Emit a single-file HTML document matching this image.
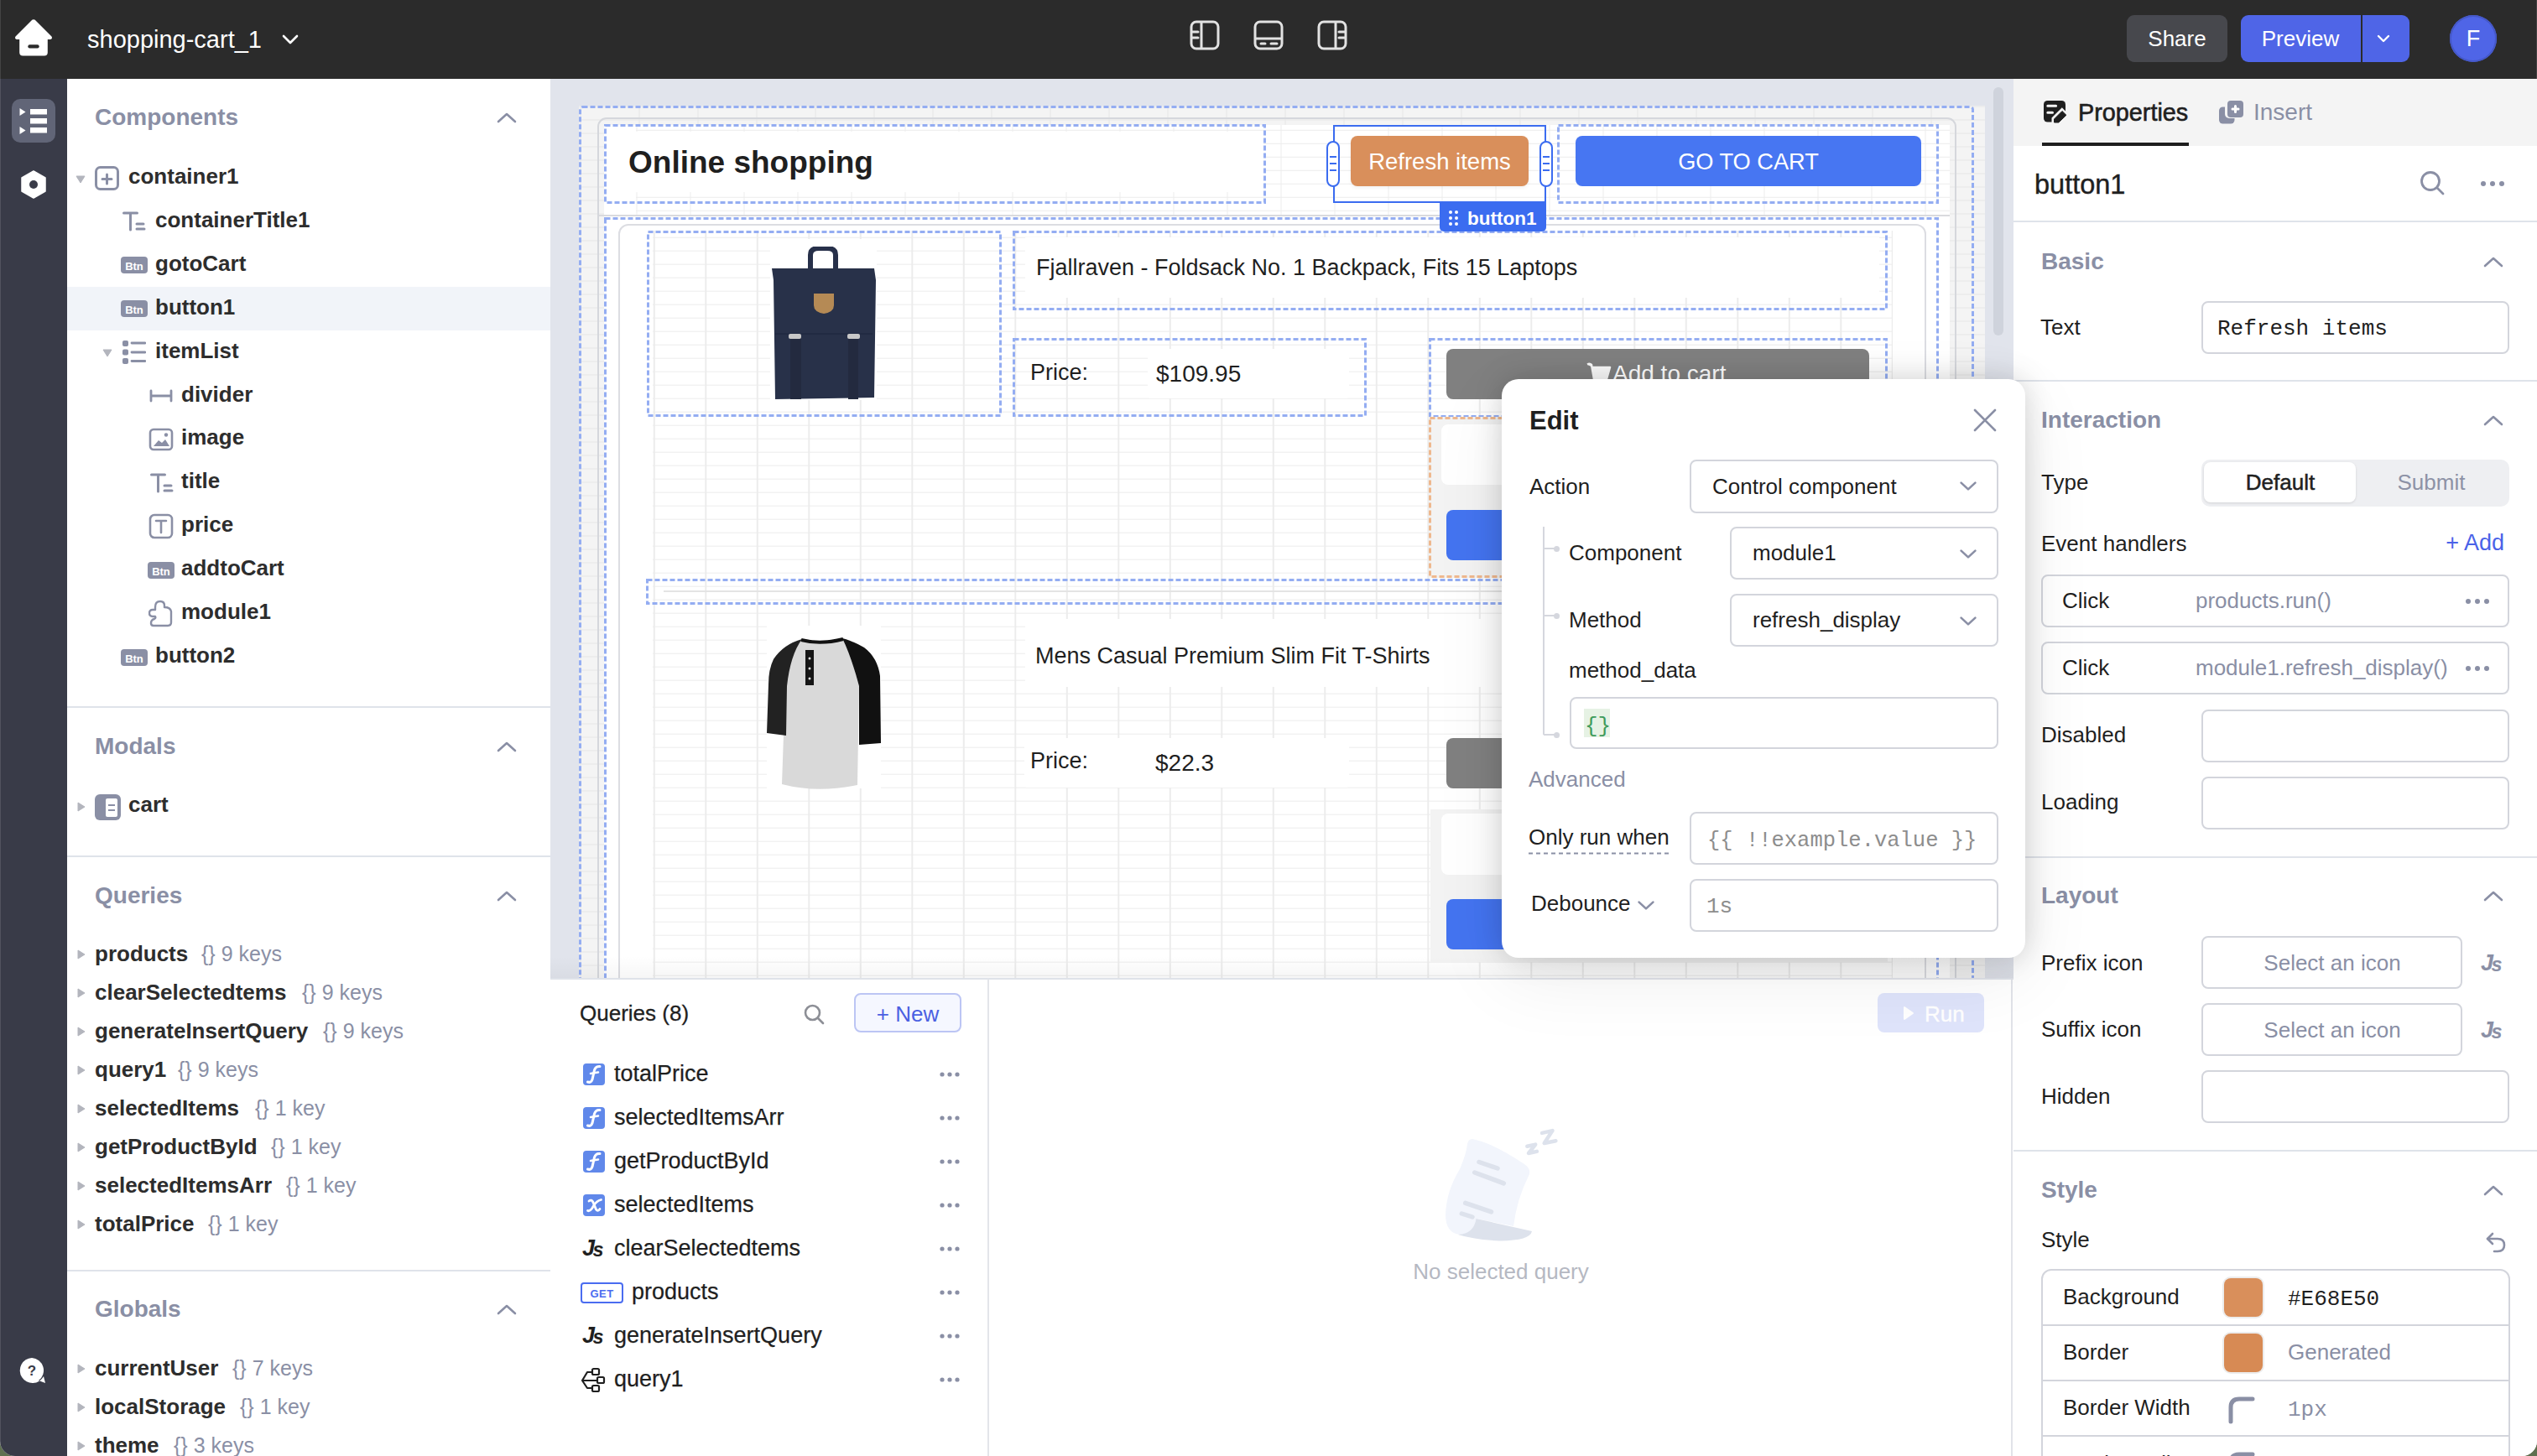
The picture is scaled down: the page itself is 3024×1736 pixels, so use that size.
<!DOCTYPE html>
<html><head><meta charset="utf-8"><style>
html,body{margin:0;padding:0;}
body{width:3024px;height:1736px;overflow:hidden;position:relative;background:#5f7050;font-family:'Liberation Sans',sans-serif;}
#app{position:absolute;left:0;top:0;width:3024px;height:1736px;overflow:hidden;border-radius:0 0 18px 18px;background:#fff;}
</style></head><body><div id="app">
<div style="position:absolute;left:0px;top:0px;width:3024px;height:94px;background:#2b2b2b;"></div>
<div style="position:absolute;left:0px;top:94px;width:80px;height:1642px;background:#393b48;"></div>
<div style="position:absolute;left:80px;top:94px;width:576px;height:1642px;background:#fff;"></div>
<div style="position:absolute;left:656px;top:94px;width:1744px;height:1072px;background:#e1e4ec;"></div>
<svg style="position:absolute;left:16px;top:21px;" width="48" height="48" viewBox="0 0 48 48"><path d="M24 2.5 Q25 2 26 3 L45.5 22.5 Q47 25 44 26 L40.8 26 L40.8 41.5 Q40.8 45.5 36.8 45.5 L11.2 45.5 Q7.2 45.5 7.2 41.5 L7.2 26 L4 26 Q1 25 2.5 22.5 L22 3 Q23 2 24 2.5 Z" fill="#fff"/><rect x="17.3" y="32.3" width="13.4" height="4.3" rx="2.1" fill="#2b2b2b"/></svg>
<div style="position:absolute;top:32.5px;font-size:29px;line-height:29px;color:#fff;font-weight:400;font-family:'Liberation Sans', sans-serif;white-space:nowrap;left:104px;">shopping-cart_1</div>
<svg style="position:absolute;left:335px;top:40px;" width="22" height="14" viewBox="0 0 22 14"><path d="M3 3 L11 11 L19 3" stroke="#fff" stroke-width="2.6" fill="none" stroke-linecap="round" stroke-linejoin="round"/></svg>
<svg style="position:absolute;left:1418px;top:24px;" width="36" height="36" viewBox="0 0 36 36"><rect x="2" y="2" width="32" height="32" rx="6" stroke="#e2e2e2" stroke-width="3" fill="none"/><line x1="14" y1="2" x2="14" y2="34" stroke="#e2e2e2" stroke-width="3"/><line x1="3" y1="14" x2="10" y2="14" stroke="#e2e2e2" stroke-width="3" stroke-linecap="round"/><line x1="3" y1="21" x2="10" y2="21" stroke="#e2e2e2" stroke-width="3" stroke-linecap="round"/></svg>
<svg style="position:absolute;left:1494px;top:24px;" width="36" height="36" viewBox="0 0 36 36"><rect x="2" y="2" width="32" height="32" rx="6" stroke="#e2e2e2" stroke-width="3" fill="none"/><line x1="2" y1="22" x2="34" y2="22" stroke="#e2e2e2" stroke-width="3"/><line x1="9" y1="28" x2="14" y2="28" stroke="#e2e2e2" stroke-width="3" stroke-linecap="round"/><line x1="21" y1="28" x2="28" y2="28" stroke="#e2e2e2" stroke-width="3" stroke-linecap="round"/></svg>
<svg style="position:absolute;left:1570px;top:24px;" width="36" height="36" viewBox="0 0 36 36"><rect x="2" y="2" width="32" height="32" rx="6" stroke="#e2e2e2" stroke-width="3" fill="none"/><line x1="22" y1="2" x2="22" y2="34" stroke="#e2e2e2" stroke-width="3"/><line x1="26" y1="14" x2="33" y2="14" stroke="#e2e2e2" stroke-width="3" stroke-linecap="round"/><line x1="26" y1="21" x2="33" y2="21" stroke="#e2e2e2" stroke-width="3" stroke-linecap="round"/></svg>
<div style="position:absolute;left:2535px;top:18px;width:120px;height:56px;background:#47484d;border-radius:9px;"></div>
<div style="position:absolute;top:33.0px;font-size:26px;line-height:26px;color:#fff;font-weight:400;font-family:'Liberation Sans', sans-serif;white-space:nowrap;left:1595px;width:2000px;text-align:center;">Share</div>
<div style="position:absolute;left:2671px;top:18px;width:201px;height:56px;background:#4f65e7;border-radius:9px;"></div>
<div style="position:absolute;left:2814px;top:18px;width:2px;height:56px;background:#2b2b2b;"></div>
<div style="position:absolute;top:33.0px;font-size:26px;line-height:26px;color:#fff;font-weight:400;font-family:'Liberation Sans', sans-serif;white-space:nowrap;left:1742px;width:2000px;text-align:center;">Preview</div>
<svg style="position:absolute;left:2831px;top:40px;" width="20" height="12" viewBox="0 0 20 12"><path d="M4 3 L10 9 L16 3" stroke="#fff" stroke-width="2.4" fill="none" stroke-linecap="round" stroke-linejoin="round"/></svg>
<div style="position:absolute;left:2920px;top:18px;width:56px;height:56px;background:#4f65e7;border-radius:50%;box-shadow:inset 0 0 0 2px #4558c8;"></div>
<div style="position:absolute;top:33.1px;font-size:27px;line-height:27px;color:#fff;font-weight:400;font-family:'Liberation Sans', sans-serif;white-space:nowrap;left:1948px;width:2000px;text-align:center;">F</div>
<div style="position:absolute;left:14px;top:118px;width:52px;height:52px;background:#616577;border-radius:10px;"></div>
<svg style="position:absolute;left:14px;top:118px;" width="52" height="52" viewBox="0 0 52 52"><path d="M9.5 11 L16.5 15.5 L9.5 20 Z" fill="#fff"/><path d="M9.5 33 L16.5 37.5 L9.5 42 Z" fill="#fff"/><rect x="22" y="12" width="20" height="6.5" fill="#fff"/><rect x="22" y="23" width="20" height="6.5" fill="#fff"/><rect x="22" y="34" width="20" height="6.5" fill="#fff"/></svg>
<svg style="position:absolute;left:24px;top:203px;" width="32" height="34" viewBox="0 0 32 34"><path d="M16 1 L30 9 L30 25 L16 33 L2 25 L2 9 Z" fill="#fff" stroke="#fff" stroke-width="1.5" stroke-linejoin="round"/><circle cx="16" cy="17" r="5" fill="#393b48"/></svg>
<svg style="position:absolute;left:21px;top:1617px;" width="34" height="34" viewBox="0 0 34 34"><path d="M17 2 A15 15 0 1 0 31 24 L33 32 L25 29 A15 15 0 0 0 17 2 Z" fill="#fff"/><text x="17" y="23" font-family="Liberation Sans" font-weight="bold" font-size="17" text-anchor="middle" fill="#393b48">?</text></svg>
<div style="position:absolute;top:126.3px;font-size:28px;line-height:28px;color:#8a8fa5;font-weight:700;font-family:'Liberation Sans', sans-serif;white-space:nowrap;left:113px;">Components</div>
<svg style="position:absolute;left:592px;top:133px;" width="24" height="14" viewBox="0 0 24 14"><path d="M2 12 L12 3 L22 12" stroke="#8a8fa5" stroke-width="2.6" fill="none" stroke-linecap="round" stroke-linejoin="round"/></svg>
<div style="position:absolute;left:80px;top:342px;width:576px;height:52px;background:#f1f4f9;"></div>
<svg style="position:absolute;left:90px;top:209px;" width="12" height="10" viewBox="0 0 12 10"><path d="M1 1 L11 1 L6 9 Z" fill="#b3b5bd" stroke="#b3b5bd" stroke-width="1" stroke-linejoin="round"/></svg>
<svg style="position:absolute;left:112px;top:197px;" width="31" height="31" viewBox="0 0 31 31"><rect x="2.5" y="2.5" width="26" height="26" rx="5" stroke="#8a8fa5" stroke-width="3" fill="none"/><path d="M15.5 11 V22 M10 16.5 H21" stroke="#8a8fa5" stroke-width="3" stroke-linecap="round"/></svg>
<div style="position:absolute;top:197.0px;font-size:26px;line-height:26px;color:#2d2d2d;font-weight:700;font-family:'Liberation Sans', sans-serif;white-space:nowrap;left:153px;">container1</div>
<svg style="position:absolute;left:146px;top:252px;" width="28" height="24" viewBox="0 0 28 24"><path d="M1.5 2 H17.5 M9.5 2 V22" stroke="#8a8fa5" stroke-width="3" stroke-linecap="round"/><path d="M17 15 H25 M17 21 H26" stroke="#8a8fa5" stroke-width="3" stroke-linecap="round"/></svg>
<div style="position:absolute;top:249.0px;font-size:26px;line-height:26px;color:#2d2d2d;font-weight:700;font-family:'Liberation Sans', sans-serif;white-space:nowrap;left:185px;">containerTitle1</div>
<div style="position:absolute;left:144px;top:306px;width:32px;height:20px;background:#8a8fa5;border-radius:4px;"></div>
<div style="position:absolute;top:310.5px;font-size:13px;line-height:13px;color:#fff;font-weight:700;font-family:'Liberation Sans', sans-serif;white-space:nowrap;left:-840px;width:2000px;text-align:center;">Btn</div>
<div style="position:absolute;top:301.0px;font-size:26px;line-height:26px;color:#2d2d2d;font-weight:700;font-family:'Liberation Sans', sans-serif;white-space:nowrap;left:185px;">gotoCart</div>
<div style="position:absolute;left:144px;top:358px;width:32px;height:20px;background:#8a8fa5;border-radius:4px;"></div>
<div style="position:absolute;top:362.5px;font-size:13px;line-height:13px;color:#fff;font-weight:700;font-family:'Liberation Sans', sans-serif;white-space:nowrap;left:-840px;width:2000px;text-align:center;">Btn</div>
<div style="position:absolute;top:353.0px;font-size:26px;line-height:26px;color:#2d2d2d;font-weight:700;font-family:'Liberation Sans', sans-serif;white-space:nowrap;left:185px;">button1</div>
<svg style="position:absolute;left:122px;top:416px;" width="12" height="10" viewBox="0 0 12 10"><path d="M1 1 L11 1 L6 9 Z" fill="#b3b5bd" stroke="#b3b5bd" stroke-width="1" stroke-linejoin="round"/></svg>
<svg style="position:absolute;left:146px;top:405px;" width="28" height="30" viewBox="0 0 28 30"><rect x="0" y="1" width="7" height="7" rx="2" fill="#8a8fa5"/><rect x="0" y="11.5" width="7" height="7" rx="2" fill="#8a8fa5"/><rect x="0" y="22" width="7" height="7" rx="2" fill="#8a8fa5"/><path d="M11 4 H27 M11 15 H27 M11 25.5 H27" stroke="#8a8fa5" stroke-width="2.8" stroke-linecap="round"/></svg>
<div style="position:absolute;top:405.0px;font-size:26px;line-height:26px;color:#2d2d2d;font-weight:700;font-family:'Liberation Sans', sans-serif;white-space:nowrap;left:185px;">itemList</div>
<svg style="position:absolute;left:178px;top:464px;" width="28" height="16" viewBox="0 0 28 16"><path d="M2 2 V14 M26 2 V14 M2 8 H26" stroke="#8a8fa5" stroke-width="2.8" stroke-linecap="round"/></svg>
<div style="position:absolute;top:457.0px;font-size:26px;line-height:26px;color:#2d2d2d;font-weight:700;font-family:'Liberation Sans', sans-serif;white-space:nowrap;left:216px;">divider</div>
<svg style="position:absolute;left:177px;top:510px;" width="30" height="28" viewBox="0 0 30 28"><rect x="2" y="2" width="26" height="24" rx="4" stroke="#8a8fa5" stroke-width="2.6" fill="none"/><path d="M6 22 L12 15 L16 18 L20 14 L25 22 Z" fill="#8a8fa5"/><circle cx="21" cy="8.5" r="2.2" fill="#8a8fa5"/></svg>
<div style="position:absolute;top:508.0px;font-size:26px;line-height:26px;color:#2d2d2d;font-weight:700;font-family:'Liberation Sans', sans-serif;white-space:nowrap;left:216px;">image</div>
<svg style="position:absolute;left:179px;top:564px;" width="28" height="24" viewBox="0 0 28 24"><path d="M1.5 2 H17.5 M9.5 2 V22" stroke="#8a8fa5" stroke-width="3" stroke-linecap="round"/><path d="M17 15 H25 M17 21 H26" stroke="#8a8fa5" stroke-width="3" stroke-linecap="round"/></svg>
<div style="position:absolute;top:560.0px;font-size:26px;line-height:26px;color:#2d2d2d;font-weight:700;font-family:'Liberation Sans', sans-serif;white-space:nowrap;left:216px;">title</div>
<svg style="position:absolute;left:177px;top:612px;" width="30" height="31" viewBox="0 0 30 31"><rect x="2" y="2" width="26" height="27" rx="5" stroke="#8a8fa5" stroke-width="2.6" fill="none"/><path d="M9 9 H21 M15 9 V23" stroke="#8a8fa5" stroke-width="2.6" stroke-linecap="round"/></svg>
<div style="position:absolute;top:612.0px;font-size:26px;line-height:26px;color:#2d2d2d;font-weight:700;font-family:'Liberation Sans', sans-serif;white-space:nowrap;left:216px;">price</div>
<div style="position:absolute;left:176px;top:670px;width:32px;height:20px;background:#8a8fa5;border-radius:4px;"></div>
<div style="position:absolute;top:674.5px;font-size:13px;line-height:13px;color:#fff;font-weight:700;font-family:'Liberation Sans', sans-serif;white-space:nowrap;left:-808px;width:2000px;text-align:center;">Btn</div>
<div style="position:absolute;top:664.0px;font-size:26px;line-height:26px;color:#2d2d2d;font-weight:700;font-family:'Liberation Sans', sans-serif;white-space:nowrap;left:216px;">addtoCart</div>
<svg style="position:absolute;left:177px;top:715px;" width="30" height="33" viewBox="0 0 30 33"><path d="M5 20 Q1 20 1 16 Q1 12 5 12 L8 12 L8 9 Q8 2 14 2 Q19 2 19 7 L19 9 Q26 9 27 14 L27 27 Q27 31 23 31 L6 31 Q3 31 3 28 Q3 24 7 23 Q9 22 8 20 Z" stroke="#8a8fa5" stroke-width="2.4" fill="none" stroke-linejoin="round"/></svg>
<div style="position:absolute;top:716.0px;font-size:26px;line-height:26px;color:#2d2d2d;font-weight:700;font-family:'Liberation Sans', sans-serif;white-space:nowrap;left:216px;">module1</div>
<div style="position:absolute;left:144px;top:774px;width:32px;height:20px;background:#8a8fa5;border-radius:4px;"></div>
<div style="position:absolute;top:778.5px;font-size:13px;line-height:13px;color:#fff;font-weight:700;font-family:'Liberation Sans', sans-serif;white-space:nowrap;left:-840px;width:2000px;text-align:center;">Btn</div>
<div style="position:absolute;top:768.0px;font-size:26px;line-height:26px;color:#2d2d2d;font-weight:700;font-family:'Liberation Sans', sans-serif;white-space:nowrap;left:185px;">button2</div>
<div style="position:absolute;left:80px;top:842px;width:576px;height:2px;background:#dfe3ea;"></div>
<div style="position:absolute;top:876.3px;font-size:28px;line-height:28px;color:#8a8fa5;font-weight:700;font-family:'Liberation Sans', sans-serif;white-space:nowrap;left:113px;">Modals</div>
<svg style="position:absolute;left:592px;top:883px;" width="24" height="14" viewBox="0 0 24 14"><path d="M2 12 L12 3 L22 12" stroke="#8a8fa5" stroke-width="2.6" fill="none" stroke-linecap="round" stroke-linejoin="round"/></svg>
<svg style="position:absolute;left:92px;top:956px;" width="10" height="12" viewBox="0 0 10 12"><path d="M1 1 L9 6 L1 11 Z" fill="#b3b5bd" stroke="#b3b5bd" stroke-width="1" stroke-linejoin="round"/></svg>
<svg style="position:absolute;left:112px;top:946px;" width="33" height="33" viewBox="0 0 33 33"><rect x="1" y="1" width="31" height="31" rx="6" fill="#8a8fa5"/><rect x="14" y="6" width="14" height="22" rx="2" fill="#fff"/><path d="M17 14 H25 M17 20 H25" stroke="#8a8fa5" stroke-width="2.2"/></svg>
<div style="position:absolute;top:946.0px;font-size:26px;line-height:26px;color:#2d2d2d;font-weight:700;font-family:'Liberation Sans', sans-serif;white-space:nowrap;left:153px;">cart</div>
<div style="position:absolute;left:80px;top:1020px;width:576px;height:2px;background:#dfe3ea;"></div>
<div style="position:absolute;top:1054.3px;font-size:28px;line-height:28px;color:#8a8fa5;font-weight:700;font-family:'Liberation Sans', sans-serif;white-space:nowrap;left:113px;">Queries</div>
<svg style="position:absolute;left:592px;top:1061px;" width="24" height="14" viewBox="0 0 24 14"><path d="M2 12 L12 3 L22 12" stroke="#8a8fa5" stroke-width="2.6" fill="none" stroke-linecap="round" stroke-linejoin="round"/></svg>
<svg style="position:absolute;left:92px;top:1132px;" width="10" height="12" viewBox="0 0 10 12"><path d="M1 1 L9 6 L1 11 Z" fill="#b3b5bd" stroke="#b3b5bd" stroke-width="1" stroke-linejoin="round"/></svg>
<div style="position:absolute;top:1124.0px;font-size:26px;line-height:26px;color:#2d2d2d;font-weight:700;font-family:'Liberation Sans', sans-serif;white-space:nowrap;left:113px;">products</div>
<div style="position:absolute;top:1124.8px;font-size:25px;line-height:25px;color:#8a8fa5;font-weight:400;font-family:'Liberation Sans', sans-serif;white-space:nowrap;left:240px;">{} 9 keys</div>
<svg style="position:absolute;left:92px;top:1178px;" width="10" height="12" viewBox="0 0 10 12"><path d="M1 1 L9 6 L1 11 Z" fill="#b3b5bd" stroke="#b3b5bd" stroke-width="1" stroke-linejoin="round"/></svg>
<div style="position:absolute;top:1170.0px;font-size:26px;line-height:26px;color:#2d2d2d;font-weight:700;font-family:'Liberation Sans', sans-serif;white-space:nowrap;left:113px;">clearSelectedtems</div>
<div style="position:absolute;top:1170.8px;font-size:25px;line-height:25px;color:#8a8fa5;font-weight:400;font-family:'Liberation Sans', sans-serif;white-space:nowrap;left:360px;">{} 9 keys</div>
<svg style="position:absolute;left:92px;top:1224px;" width="10" height="12" viewBox="0 0 10 12"><path d="M1 1 L9 6 L1 11 Z" fill="#b3b5bd" stroke="#b3b5bd" stroke-width="1" stroke-linejoin="round"/></svg>
<div style="position:absolute;top:1216.0px;font-size:26px;line-height:26px;color:#2d2d2d;font-weight:700;font-family:'Liberation Sans', sans-serif;white-space:nowrap;left:113px;">generateInsertQuery</div>
<div style="position:absolute;top:1216.8px;font-size:25px;line-height:25px;color:#8a8fa5;font-weight:400;font-family:'Liberation Sans', sans-serif;white-space:nowrap;left:385px;">{} 9 keys</div>
<svg style="position:absolute;left:92px;top:1270px;" width="10" height="12" viewBox="0 0 10 12"><path d="M1 1 L9 6 L1 11 Z" fill="#b3b5bd" stroke="#b3b5bd" stroke-width="1" stroke-linejoin="round"/></svg>
<div style="position:absolute;top:1262.0px;font-size:26px;line-height:26px;color:#2d2d2d;font-weight:700;font-family:'Liberation Sans', sans-serif;white-space:nowrap;left:113px;">query1</div>
<div style="position:absolute;top:1262.8px;font-size:25px;line-height:25px;color:#8a8fa5;font-weight:400;font-family:'Liberation Sans', sans-serif;white-space:nowrap;left:212px;">{} 9 keys</div>
<svg style="position:absolute;left:92px;top:1316px;" width="10" height="12" viewBox="0 0 10 12"><path d="M1 1 L9 6 L1 11 Z" fill="#b3b5bd" stroke="#b3b5bd" stroke-width="1" stroke-linejoin="round"/></svg>
<div style="position:absolute;top:1308.0px;font-size:26px;line-height:26px;color:#2d2d2d;font-weight:700;font-family:'Liberation Sans', sans-serif;white-space:nowrap;left:113px;">selectedItems</div>
<div style="position:absolute;top:1308.8px;font-size:25px;line-height:25px;color:#8a8fa5;font-weight:400;font-family:'Liberation Sans', sans-serif;white-space:nowrap;left:304px;">{} 1 key</div>
<svg style="position:absolute;left:92px;top:1362px;" width="10" height="12" viewBox="0 0 10 12"><path d="M1 1 L9 6 L1 11 Z" fill="#b3b5bd" stroke="#b3b5bd" stroke-width="1" stroke-linejoin="round"/></svg>
<div style="position:absolute;top:1354.0px;font-size:26px;line-height:26px;color:#2d2d2d;font-weight:700;font-family:'Liberation Sans', sans-serif;white-space:nowrap;left:113px;">getProductById</div>
<div style="position:absolute;top:1354.8px;font-size:25px;line-height:25px;color:#8a8fa5;font-weight:400;font-family:'Liberation Sans', sans-serif;white-space:nowrap;left:323px;">{} 1 key</div>
<svg style="position:absolute;left:92px;top:1408px;" width="10" height="12" viewBox="0 0 10 12"><path d="M1 1 L9 6 L1 11 Z" fill="#b3b5bd" stroke="#b3b5bd" stroke-width="1" stroke-linejoin="round"/></svg>
<div style="position:absolute;top:1400.0px;font-size:26px;line-height:26px;color:#2d2d2d;font-weight:700;font-family:'Liberation Sans', sans-serif;white-space:nowrap;left:113px;">selectedItemsArr</div>
<div style="position:absolute;top:1400.8px;font-size:25px;line-height:25px;color:#8a8fa5;font-weight:400;font-family:'Liberation Sans', sans-serif;white-space:nowrap;left:341px;">{} 1 key</div>
<svg style="position:absolute;left:92px;top:1454px;" width="10" height="12" viewBox="0 0 10 12"><path d="M1 1 L9 6 L1 11 Z" fill="#b3b5bd" stroke="#b3b5bd" stroke-width="1" stroke-linejoin="round"/></svg>
<div style="position:absolute;top:1446.0px;font-size:26px;line-height:26px;color:#2d2d2d;font-weight:700;font-family:'Liberation Sans', sans-serif;white-space:nowrap;left:113px;">totalPrice</div>
<div style="position:absolute;top:1446.8px;font-size:25px;line-height:25px;color:#8a8fa5;font-weight:400;font-family:'Liberation Sans', sans-serif;white-space:nowrap;left:248px;">{} 1 key</div>
<div style="position:absolute;left:80px;top:1514px;width:576px;height:2px;background:#dfe3ea;"></div>
<div style="position:absolute;top:1547.3px;font-size:28px;line-height:28px;color:#8a8fa5;font-weight:700;font-family:'Liberation Sans', sans-serif;white-space:nowrap;left:113px;">Globals</div>
<svg style="position:absolute;left:592px;top:1554px;" width="24" height="14" viewBox="0 0 24 14"><path d="M2 12 L12 3 L22 12" stroke="#8a8fa5" stroke-width="2.6" fill="none" stroke-linecap="round" stroke-linejoin="round"/></svg>
<svg style="position:absolute;left:92px;top:1626px;" width="10" height="12" viewBox="0 0 10 12"><path d="M1 1 L9 6 L1 11 Z" fill="#b3b5bd" stroke="#b3b5bd" stroke-width="1" stroke-linejoin="round"/></svg>
<div style="position:absolute;top:1618.0px;font-size:26px;line-height:26px;color:#2d2d2d;font-weight:700;font-family:'Liberation Sans', sans-serif;white-space:nowrap;left:113px;">currentUser</div>
<div style="position:absolute;top:1618.8px;font-size:25px;line-height:25px;color:#8a8fa5;font-weight:400;font-family:'Liberation Sans', sans-serif;white-space:nowrap;left:277px;">{} 7 keys</div>
<svg style="position:absolute;left:92px;top:1672px;" width="10" height="12" viewBox="0 0 10 12"><path d="M1 1 L9 6 L1 11 Z" fill="#b3b5bd" stroke="#b3b5bd" stroke-width="1" stroke-linejoin="round"/></svg>
<div style="position:absolute;top:1664.0px;font-size:26px;line-height:26px;color:#2d2d2d;font-weight:700;font-family:'Liberation Sans', sans-serif;white-space:nowrap;left:113px;">localStorage</div>
<div style="position:absolute;top:1664.8px;font-size:25px;line-height:25px;color:#8a8fa5;font-weight:400;font-family:'Liberation Sans', sans-serif;white-space:nowrap;left:286px;">{} 1 key</div>
<svg style="position:absolute;left:92px;top:1718px;" width="10" height="12" viewBox="0 0 10 12"><path d="M1 1 L9 6 L1 11 Z" fill="#b3b5bd" stroke="#b3b5bd" stroke-width="1" stroke-linejoin="round"/></svg>
<div style="position:absolute;top:1710.0px;font-size:26px;line-height:26px;color:#2d2d2d;font-weight:700;font-family:'Liberation Sans', sans-serif;white-space:nowrap;left:113px;">theme</div>
<div style="position:absolute;top:1710.8px;font-size:25px;line-height:25px;color:#8a8fa5;font-weight:400;font-family:'Liberation Sans', sans-serif;white-space:nowrap;left:207px;">{} 3 keys</div>
<div style="position:absolute;left:0;top:0;width:3024px;height:1736px;clip-path:inset(94px 624px 570px 656px);">
<div style="position:absolute;left:2376px;top:104px;width:12px;height:296px;background:#cfd3dc;border-radius:6px;"></div>
<div style="position:absolute;left:690px;top:126px;width:1676px;height:1040px;background-color:#f4f4f4;background-image:linear-gradient(to right,#e6e6e6 1.5px,transparent 1.5px),linear-gradient(to bottom,#e6e6e6 1.5px,transparent 1.5px);background-size:70px 16px;background-position:1.5px 0.5px;"></div>
<svg style="position:absolute;left:690px;top:126px;" width="1663" height="1060" viewBox="0 0 1663 1060"><rect x="1.5" y="1.5" width="1660" height="1057" rx="3" fill="none" stroke="#94adf2" stroke-width="3" stroke-dasharray="6 3"/></svg>
<div style="position:absolute;left:712px;top:140px;width:1620px;height:1040px;border:2px solid #d5d7dc;border-radius:11px;box-sizing:border-box;"></div>
<div style="position:absolute;left:720px;top:149px;width:38px;height:108px;background:#fff;"></div>
<div style="position:absolute;left:758px;top:149px;width:1566px;height:108px;background-color:#fff;background-image:linear-gradient(to right,#ececec 1.5px,transparent 1.5px),linear-gradient(to bottom,#ececec 1.5px,transparent 1.5px);background-size:64px 16px;background-position:0.5px 5.800000000000011px;"></div>
<div style="position:absolute;left:720px;top:258px;width:1604px;height:920px;background:#fff;"></div>
<div style="position:absolute;left:714px;top:256px;width:1610px;height:2px;background:#d9dade;"></div>
<div style="position:absolute;left:758px;top:156.5px;width:748px;height:72px;background:#fff;"></div>
<svg style="position:absolute;left:720px;top:148px;" width="789" height="95" viewBox="0 0 789 95"><rect x="1.5" y="1.5" width="786" height="92" rx="0" fill="none" stroke="#94adf2" stroke-width="3" stroke-dasharray="6 3"/></svg>
<div style="position:absolute;top:174.7px;font-size:37px;line-height:37px;color:#1f1f1f;font-weight:700;font-family:'Liberation Sans', sans-serif;white-space:nowrap;left:749px;">Online shopping</div>
<svg style="position:absolute;left:1856px;top:148px;" width="455" height="95" viewBox="0 0 455 95"><rect x="1.5" y="1.5" width="452" height="92" rx="0" fill="none" stroke="#94adf2" stroke-width="3" stroke-dasharray="6 3"/></svg>
<div style="position:absolute;left:1878px;top:162px;width:412px;height:60px;background:#4776f2;border-radius:8px;"></div>
<div style="position:absolute;top:179.0px;font-size:27.2px;line-height:27.2px;color:#fff;font-weight:400;font-family:'Liberation Sans', sans-serif;white-space:nowrap;left:1084px;width:2000px;text-align:center;">GO TO CART</div>
<svg style="position:absolute;left:720px;top:259px;" width="1591" height="920" viewBox="0 0 1591 920"><rect x="1.5" y="1.5" width="1588" height="917" rx="0" fill="none" stroke="#94adf2" stroke-width="3" stroke-dasharray="6 3"/></svg>
<div style="position:absolute;left:737px;top:267px;width:1559px;height:920px;border:2px solid #dcdde2;border-radius:12px;box-sizing:border-box;background:#fff;"></div>
<div style="position:absolute;left:778px;top:275px;width:1478px;height:891px;background-color:#fff;background-image:linear-gradient(to right,#ececec 1.5px,transparent 1.5px),linear-gradient(to bottom,#ececec 1.5px,transparent 1.5px);background-size:61.5px 16px;background-position:0.7999999999999545px 7.699999999999989px;"></div>
<svg style="position:absolute;left:771px;top:275px;" width="423" height="222" viewBox="0 0 423 222"><rect x="1.5" y="1.5" width="420" height="219" rx="0" fill="none" stroke="#94adf2" stroke-width="3" stroke-dasharray="6 3"/></svg>
<div style="position:absolute;left:918px;top:285px;width:127px;height:192px;background:#fff;"></div>
<svg style="position:absolute;left:918px;top:294px;" width="128" height="184" viewBox="0 0 128 184">
<path d="M48 26 L48 10 Q48 2 58 2 L68 2 Q78 2 78 10 L78 26" stroke="#27304a" stroke-width="6" fill="none"/>
<path d="M2 26 L124 26 L126 40 L124 180 L6 182 L4 40 Z" fill="#283149"/>
<path d="M6 104 L122 104" stroke="#1f2840" stroke-width="1.5"/>
<rect x="24" y="106" width="13" height="76" fill="#232a3f"/>
<rect x="93" y="106" width="12" height="76" fill="#232a3f"/>
<rect x="22" y="104" width="15" height="6" rx="2" fill="#c8c8c8"/>
<rect x="92" y="104" width="15" height="6" rx="2" fill="#c8c8c8"/>
<path d="M52 56 L76 56 L76 70 Q76 78 64 80 Q52 78 52 70 Z" fill="#b58a55"/>
</svg>
<svg style="position:absolute;left:1207px;top:275px;" width="1043" height="95" viewBox="0 0 1043 95"><rect x="1.5" y="1.5" width="1040" height="92" rx="0" fill="none" stroke="#94adf2" stroke-width="3" stroke-dasharray="6 3"/></svg>
<div style="position:absolute;left:1222px;top:283px;width:1018px;height:72px;background:#fff;"></div>
<div style="position:absolute;top:306.1px;font-size:27px;line-height:27px;color:#1f1f1f;font-weight:400;font-family:'Liberation Sans', sans-serif;white-space:nowrap;left:1235px;">Fjallraven - Foldsack No. 1 Backpack, Fits 15 Laptops</div>
<svg style="position:absolute;left:1207px;top:403px;" width="422" height="94" viewBox="0 0 422 94"><rect x="1.5" y="1.5" width="419" height="91" rx="0" fill="none" stroke="#94adf2" stroke-width="3" stroke-dasharray="6 3"/></svg>
<div style="position:absolute;left:1368px;top:416px;width:240px;height:59px;background:#fff;border-radius:4px;"></div>
<div style="position:absolute;top:431.1px;font-size:27px;line-height:27px;color:#1f1f1f;font-weight:400;font-family:'Liberation Sans', sans-serif;white-space:nowrap;left:1228px;">Price:</div>
<div style="position:absolute;top:431.8px;font-size:28px;line-height:28px;color:#1f1f1f;font-weight:400;font-family:'Liberation Sans', sans-serif;white-space:nowrap;left:1378px;">$109.95</div>
<svg style="position:absolute;left:1703px;top:403px;" width="547" height="95" viewBox="0 0 547 95"><rect x="1.5" y="1.5" width="544" height="92" rx="0" fill="none" stroke="#94adf2" stroke-width="3" stroke-dasharray="6 3"/></svg>
<div style="position:absolute;left:1724px;top:416px;width:504px;height:60px;background:#808080;border-radius:8px;"></div>
<svg style="position:absolute;left:1890px;top:432px;" width="32" height="30" viewBox="0 0 32 30"><path d="M2 2.5 Q5 1 7 3 L10 20 H25 L29 6 H8" fill="#fafafa" stroke="#fafafa" stroke-width="2.5" stroke-linejoin="round"/><path d="M9 24 H26" stroke="#fafafa" stroke-width="3"/></svg>
<div style="position:absolute;top:432.3px;font-size:28px;line-height:28px;color:#fff;font-weight:400;font-family:'Liberation Sans', sans-serif;white-space:nowrap;left:1922px;">Add to cart</div>
<div style="position:absolute;left:1703px;top:497px;width:547px;height:192px;background:#f3f3f3;"></div>
<svg style="position:absolute;left:1703px;top:497px;" width="547" height="192" viewBox="0 0 547 192"><rect x="1.5" y="1.5" width="544" height="189" rx="0" fill="none" stroke="#eeb88e" stroke-width="3" stroke-dasharray="6 3"/></svg>
<div style="position:absolute;left:1718px;top:506px;width:517px;height:72px;background:#fff;border-radius:8px;"></div>
<div style="position:absolute;left:1724px;top:608px;width:504px;height:60px;background:#4474f0;border-radius:8px;"></div>
<svg style="position:absolute;left:770px;top:690px;" width="1480" height="31" viewBox="0 0 1480 31"><rect x="1.5" y="1.5" width="1477" height="28" rx="0" fill="none" stroke="#94adf2" stroke-width="3" stroke-dasharray="6 3"/></svg>
<div style="position:absolute;left:791px;top:704px;width:1438px;height:2px;background:#e4e4e4;"></div>
<div style="position:absolute;left:914px;top:746px;width:136px;height:194px;background:#fff;"></div>
<svg style="position:absolute;left:912px;top:756px;" width="140" height="190" viewBox="0 0 140 190">
<path d="M44 6 Q60 11 92 5 Q102 25 112 62 L110 180 Q62 190 20 179 L24 62 Q30 25 44 6 Z" fill="#d9d9d9"/>
<path d="M44 6 Q22 12 10 30 Q4 42 4 60 L2 118 L25 121 L26 62 Q30 25 44 6 Z" fill="#222"/>
<path d="M92 5 Q104 8 118 16 Q134 28 137 50 L138 130 L112 132 L112 62 Q102 25 92 5 Z" fill="#111"/>
<path d="M43 7 Q66 13 93 6" stroke="#111" stroke-width="4" fill="none"/>
<rect x="48" y="19" width="10" height="42" fill="#151515"/>
<circle cx="53" cy="29" r="1.5" fill="#ddd"/><circle cx="53" cy="41" r="1.5" fill="#ddd"/><circle cx="53" cy="53" r="1.5" fill="#ddd"/>
</svg>
<div style="position:absolute;left:1222px;top:738px;width:1018px;height:81px;background:#fff;"></div>
<div style="position:absolute;top:769.1px;font-size:27px;line-height:27px;color:#1f1f1f;font-weight:400;font-family:'Liberation Sans', sans-serif;white-space:nowrap;left:1234px;">Mens Casual Premium Slim Fit T-Shirts</div>
<div style="position:absolute;left:1221px;top:880px;width:387px;height:59px;background:#fff;border-radius:4px;"></div>
<div style="position:absolute;top:893.6px;font-size:27px;line-height:27px;color:#1f1f1f;font-weight:400;font-family:'Liberation Sans', sans-serif;white-space:nowrap;left:1228px;">Price:</div>
<div style="position:absolute;top:895.8px;font-size:28px;line-height:28px;color:#1f1f1f;font-weight:400;font-family:'Liberation Sans', sans-serif;white-space:nowrap;left:1377px;">$22.3</div>
<div style="position:absolute;left:1724px;top:880px;width:504px;height:60px;background:#808080;border-radius:8px;"></div>
<div style="position:absolute;left:1705px;top:965px;width:545px;height:182px;background:#f3f3f3;"></div>
<div style="position:absolute;left:1718px;top:970px;width:517px;height:73px;background:#fff;border-radius:8px;"></div>
<div style="position:absolute;left:1724px;top:1072px;width:504px;height:60px;background:#4474f0;border-radius:8px;"></div>
<div style="position:absolute;left:1589px;top:149px;width:254px;height:93px;border:2.5px solid #3b6cf0;box-sizing:border-box;"></div>
<div style="position:absolute;left:1610px;top:162px;width:212px;height:60px;background:#d98f5b;border-radius:8px;box-shadow:0 2px 4px rgba(0,0,0,0.06);"></div>
<div style="position:absolute;top:178.7px;font-size:27.5px;line-height:27.5px;color:#fff;font-weight:400;font-family:'Liberation Sans', sans-serif;white-space:nowrap;left:716px;width:2000px;text-align:center;">Refresh items</div>
<div style="position:absolute;left:1581px;top:168px;width:16px;height:55px;background:#fff;border:2.5px solid #3b6cf0;border-radius:8px;box-sizing:border-box;"></div>
<div style="position:absolute;left:1585px;top:186px;width:8px;height:2px;background:#3b6cf0;"></div>
<div style="position:absolute;left:1585px;top:194px;width:8px;height:2px;background:#3b6cf0;"></div>
<div style="position:absolute;left:1585px;top:202px;width:8px;height:2px;background:#3b6cf0;"></div>
<div style="position:absolute;left:1835px;top:168px;width:16px;height:55px;background:#fff;border:2.5px solid #3b6cf0;border-radius:8px;box-sizing:border-box;"></div>
<div style="position:absolute;left:1839px;top:186px;width:8px;height:2px;background:#3b6cf0;"></div>
<div style="position:absolute;left:1839px;top:194px;width:8px;height:2px;background:#3b6cf0;"></div>
<div style="position:absolute;left:1839px;top:202px;width:8px;height:2px;background:#3b6cf0;"></div>
<div style="position:absolute;left:1716px;top:242px;width:127px;height:34px;background:#3b6cf0;border-radius:0 0 5px 5px;"></div>
<svg style="position:absolute;left:1725px;top:249px;" width="16" height="22" viewBox="0 0 16 22"><circle cx="4" cy="4" r="2" fill="#fff"/><circle cx="4" cy="11" r="2" fill="#fff"/><circle cx="4" cy="18" r="2" fill="#fff"/><circle cx="11" cy="4" r="2" fill="#fff"/><circle cx="11" cy="11" r="2" fill="#fff"/><circle cx="11" cy="18" r="2" fill="#fff"/></svg>
<div style="position:absolute;top:250.0px;font-size:22.5px;line-height:22.5px;color:#fff;font-weight:700;font-family:'Liberation Sans', sans-serif;white-space:nowrap;left:1749px;">button1</div>
<div style="position:absolute;left:656px;top:1140px;width:1744px;height:26px;background:linear-gradient(to bottom, rgba(0,0,0,0), rgba(0,0,0,0.035));"></div>
</div>
<div style="position:absolute;left:656px;top:1166px;width:1744px;height:570px;background:#fff;"></div>
<div style="position:absolute;left:656px;top:1166px;width:1744px;height:2px;background:#dfe2e9;"></div>
<div style="position:absolute;left:2397px;top:1167px;width:2px;height:569px;background:#e1e3e9;"></div>
<div style="position:absolute;left:1177px;top:1167px;width:2px;height:569px;background:#e3e5ea;"></div>
<div style="position:absolute;top:1195.0px;font-size:26px;line-height:26px;color:#1f1f1f;font-weight:400;font-family:'Liberation Sans', sans-serif;white-space:nowrap;left:691px;-webkit-text-stroke:0.3px #1f1f1f;">Queries (8)</div>
<svg style="position:absolute;left:957px;top:1196px;" width="28" height="26" viewBox="0 0 28 26"><circle cx="11.5" cy="11.5" r="8.5" stroke="#8d8f96" stroke-width="2.6" fill="none"/><path d="M18 18 L24 24" stroke="#8d8f96" stroke-width="2.6" stroke-linecap="round"/></svg>
<div style="position:absolute;left:1018px;top:1184px;width:128px;height:47px;background:#f5f7ff;border:2px solid #bcc5f4;border-radius:8px;box-sizing:border-box;"></div>
<div style="position:absolute;top:1196.0px;font-size:26px;line-height:26px;color:#4b60e2;font-weight:400;font-family:'Liberation Sans', sans-serif;white-space:nowrap;left:82px;width:2000px;text-align:center;">+ New</div>
<div style="position:absolute;left:695px;top:1268px;width:26px;height:26px;background:#6088ea;border-radius:4px;"></div>
<svg style="position:absolute;left:695px;top:1268px;" width="26" height="26" viewBox="0 0 26 26"><path d="M20 3.5 Q15 3 13.5 8 L11 19 Q9.5 23.5 5.5 22" stroke="#fff" stroke-width="3" fill="none" stroke-linecap="round"/><path d="M9 12 L18 10.5" stroke="#fff" stroke-width="2.6" stroke-linecap="round"/></svg>
<div style="position:absolute;top:1267.1px;font-size:27px;line-height:27px;color:#1f1f1f;font-weight:400;font-family:'Liberation Sans', sans-serif;white-space:nowrap;left:732px;-webkit-text-stroke:0.25px #1f1f1f;">totalPrice</div>
<svg style="position:absolute;left:1119px;top:1277px;" width="32" height="8" viewBox="0 0 32 8"><circle cx="4" cy="4" r="2.6" fill="#8a8fa5"/><circle cx="13" cy="4" r="2.6" fill="#8a8fa5"/><circle cx="22" cy="4" r="2.6" fill="#8a8fa5"/></svg>
<div style="position:absolute;left:695px;top:1320px;width:26px;height:26px;background:#6088ea;border-radius:4px;"></div>
<svg style="position:absolute;left:695px;top:1320px;" width="26" height="26" viewBox="0 0 26 26"><path d="M20 3.5 Q15 3 13.5 8 L11 19 Q9.5 23.5 5.5 22" stroke="#fff" stroke-width="3" fill="none" stroke-linecap="round"/><path d="M9 12 L18 10.5" stroke="#fff" stroke-width="2.6" stroke-linecap="round"/></svg>
<div style="position:absolute;top:1319.1px;font-size:27px;line-height:27px;color:#1f1f1f;font-weight:400;font-family:'Liberation Sans', sans-serif;white-space:nowrap;left:732px;-webkit-text-stroke:0.25px #1f1f1f;">selectedItemsArr</div>
<svg style="position:absolute;left:1119px;top:1329px;" width="32" height="8" viewBox="0 0 32 8"><circle cx="4" cy="4" r="2.6" fill="#8a8fa5"/><circle cx="13" cy="4" r="2.6" fill="#8a8fa5"/><circle cx="22" cy="4" r="2.6" fill="#8a8fa5"/></svg>
<div style="position:absolute;left:695px;top:1372px;width:26px;height:26px;background:#6088ea;border-radius:4px;"></div>
<svg style="position:absolute;left:695px;top:1372px;" width="26" height="26" viewBox="0 0 26 26"><path d="M20 3.5 Q15 3 13.5 8 L11 19 Q9.5 23.5 5.5 22" stroke="#fff" stroke-width="3" fill="none" stroke-linecap="round"/><path d="M9 12 L18 10.5" stroke="#fff" stroke-width="2.6" stroke-linecap="round"/></svg>
<div style="position:absolute;top:1371.1px;font-size:27px;line-height:27px;color:#1f1f1f;font-weight:400;font-family:'Liberation Sans', sans-serif;white-space:nowrap;left:732px;-webkit-text-stroke:0.25px #1f1f1f;">getProductById</div>
<svg style="position:absolute;left:1119px;top:1381px;" width="32" height="8" viewBox="0 0 32 8"><circle cx="4" cy="4" r="2.6" fill="#8a8fa5"/><circle cx="13" cy="4" r="2.6" fill="#8a8fa5"/><circle cx="22" cy="4" r="2.6" fill="#8a8fa5"/></svg>
<div style="position:absolute;left:695px;top:1424px;width:26px;height:26px;background:#6088ea;border-radius:4px;"></div>
<svg style="position:absolute;left:695px;top:1424px;" width="26" height="26" viewBox="0 0 26 26"><path d="M7 8 Q10 5.5 12 9.5 L15.5 18 Q17.5 21 20 17.5" stroke="#fff" stroke-width="2.8" fill="none" stroke-linecap="round"/><path d="M21.5 6.5 Q16 8 13 13 L10.5 17 Q8 20.5 5.5 19.5" stroke="#fff" stroke-width="2.8" fill="none" stroke-linecap="round"/></svg>
<div style="position:absolute;top:1423.1px;font-size:27px;line-height:27px;color:#1f1f1f;font-weight:400;font-family:'Liberation Sans', sans-serif;white-space:nowrap;left:732px;-webkit-text-stroke:0.25px #1f1f1f;">selectedItems</div>
<svg style="position:absolute;left:1119px;top:1433px;" width="32" height="8" viewBox="0 0 32 8"><circle cx="4" cy="4" r="2.6" fill="#8a8fa5"/><circle cx="13" cy="4" r="2.6" fill="#8a8fa5"/><circle cx="22" cy="4" r="2.6" fill="#8a8fa5"/></svg>
<div style="position:absolute;top:1475.1px;font-size:27.04px;line-height:27.04px;color:#1f1f1f;font-weight:700;font-family:'Liberation Sans', sans-serif;white-space:nowrap;left:694px;font-style:italic;">J</div>
<div style="position:absolute;top:1478.7px;font-size:23.400000000000002px;line-height:23.400000000000002px;color:#1f1f1f;font-weight:700;font-family:'Liberation Sans', sans-serif;white-space:nowrap;left:706.5px;font-style:italic;">s</div>
<div style="position:absolute;top:1475.1px;font-size:27px;line-height:27px;color:#1f1f1f;font-weight:400;font-family:'Liberation Sans', sans-serif;white-space:nowrap;left:732px;-webkit-text-stroke:0.25px #1f1f1f;">clearSelectedtems</div>
<svg style="position:absolute;left:1119px;top:1485px;" width="32" height="8" viewBox="0 0 32 8"><circle cx="4" cy="4" r="2.6" fill="#8a8fa5"/><circle cx="13" cy="4" r="2.6" fill="#8a8fa5"/><circle cx="22" cy="4" r="2.6" fill="#8a8fa5"/></svg>
<div style="position:absolute;left:692px;top:1529px;width:51px;height:25px;background:#fff;border:2px solid #4a6cf0;border-radius:4px;box-sizing:border-box;"></div>
<div style="position:absolute;top:1535.5px;font-size:13px;line-height:13px;color:#4a6cf0;font-weight:700;font-family:'Liberation Sans', sans-serif;white-space:nowrap;left:-282.5px;width:2000px;text-align:center;letter-spacing:0.5px;">GET</div>
<div style="position:absolute;top:1527.1px;font-size:27px;line-height:27px;color:#1f1f1f;font-weight:400;font-family:'Liberation Sans', sans-serif;white-space:nowrap;left:753px;-webkit-text-stroke:0.25px #1f1f1f;">products</div>
<svg style="position:absolute;left:1119px;top:1537px;" width="32" height="8" viewBox="0 0 32 8"><circle cx="4" cy="4" r="2.6" fill="#8a8fa5"/><circle cx="13" cy="4" r="2.6" fill="#8a8fa5"/><circle cx="22" cy="4" r="2.6" fill="#8a8fa5"/></svg>
<div style="position:absolute;top:1579.1px;font-size:27.04px;line-height:27.04px;color:#1f1f1f;font-weight:700;font-family:'Liberation Sans', sans-serif;white-space:nowrap;left:694px;font-style:italic;">J</div>
<div style="position:absolute;top:1582.7px;font-size:23.400000000000002px;line-height:23.400000000000002px;color:#1f1f1f;font-weight:700;font-family:'Liberation Sans', sans-serif;white-space:nowrap;left:706.5px;font-style:italic;">s</div>
<div style="position:absolute;top:1579.1px;font-size:27px;line-height:27px;color:#1f1f1f;font-weight:400;font-family:'Liberation Sans', sans-serif;white-space:nowrap;left:732px;-webkit-text-stroke:0.25px #1f1f1f;">generateInsertQuery</div>
<svg style="position:absolute;left:1119px;top:1589px;" width="32" height="8" viewBox="0 0 32 8"><circle cx="4" cy="4" r="2.6" fill="#8a8fa5"/><circle cx="13" cy="4" r="2.6" fill="#8a8fa5"/><circle cx="22" cy="4" r="2.6" fill="#8a8fa5"/></svg>
<svg style="position:absolute;left:692px;top:1630px;" width="30" height="30" viewBox="0 0 30 30"><rect x="14" y="2" width="8" height="7" rx="1.5" stroke="#1f1f1f" stroke-width="2.2" fill="none"/><rect x="20" y="12" width="8" height="7" rx="1.5" stroke="#1f1f1f" stroke-width="2.2" fill="none"/><rect x="14" y="22" width="8" height="7" rx="1.5" stroke="#1f1f1f" stroke-width="2.2" fill="none"/><path d="M14 6 L8 6 L2 16 L8 25 L14 25 M2 16 L20 16" stroke="#1f1f1f" stroke-width="2.2" fill="none" stroke-linejoin="round"/></svg>
<div style="position:absolute;top:1631.1px;font-size:27px;line-height:27px;color:#1f1f1f;font-weight:400;font-family:'Liberation Sans', sans-serif;white-space:nowrap;left:732px;-webkit-text-stroke:0.25px #1f1f1f;">query1</div>
<svg style="position:absolute;left:1119px;top:1641px;" width="32" height="8" viewBox="0 0 32 8"><circle cx="4" cy="4" r="2.6" fill="#8a8fa5"/><circle cx="13" cy="4" r="2.6" fill="#8a8fa5"/><circle cx="22" cy="4" r="2.6" fill="#8a8fa5"/></svg>
<div style="position:absolute;left:2238px;top:1184px;width:127px;height:47px;background:#dfe4fb;border-radius:8px;"></div>
<svg style="position:absolute;left:2268px;top:1199px;" width="14" height="18" viewBox="0 0 14 18"><path d="M2 2 L12 9 L2 16 Z" fill="#fff" stroke="#fff" stroke-width="2" stroke-linejoin="round"/></svg>
<div style="position:absolute;top:1196.0px;font-size:26px;line-height:26px;color:#fff;font-weight:400;font-family:'Liberation Sans', sans-serif;white-space:nowrap;left:2294px;-webkit-text-stroke:0.4px #fff;">Run</div>
<svg style="position:absolute;left:1700px;top:1330px;" width="180" height="160" viewBox="0 0 180 160">
<path d="M55 28 Q80 33 117 58 Q126 64 122 72 Q108 100 104 132 L60 123 Q58 141 40 142 Q23 140 23 118 Q24 90 40 64 Q48 45 49 34 Q50 28 55 28 Z" fill="#f2f5fc"/>
<path d="M59.5 123 L126 138 Q124 149 88 149.5 Q56 148 38 142 Q57 141 59.5 123 Z" fill="#dde2ec"/>
<path d="M63 55.5 L85 63 M57.7 68 L92.3 80.8 M46.7 104.4 L77.5 114.8 M42.3 117 L55 121" stroke="#dde2ec" stroke-width="5.5" stroke-linecap="round"/>
<path d="M120.3 36.8 L130.2 34.6 L122 45 L131.9 42.9" stroke="#dde2ec" stroke-width="4.5" fill="none" stroke-linecap="round" stroke-linejoin="round"/>
<path d="M138 20.9 L150.5 18.1 L140.7 33 L154.4 30.2" stroke="#dde2ec" stroke-width="4.5" fill="none" stroke-linecap="round" stroke-linejoin="round"/>
</svg>
<div style="position:absolute;top:1503.0px;font-size:26px;line-height:26px;color:#b5b8c2;font-weight:400;font-family:'Liberation Sans', sans-serif;white-space:nowrap;left:789px;width:2000px;text-align:center;">No selected query</div>
<div style="position:absolute;left:2400px;top:94px;width:624px;height:1642px;background:#fff;"></div>
<div style="position:absolute;left:2400px;top:94px;width:624px;height:80px;background:#f4f4f4;"></div>
<svg style="position:absolute;left:2436px;top:119px;" width="30" height="30" viewBox="0 0 30 30"><rect x="0" y="1" width="26" height="25.5" rx="4.5" fill="#1f1f1f"/><path d="M4.8 7.3 H14.6 M4.8 15.2 H10.5" stroke="#f4f4f4" stroke-width="3" stroke-linecap="round"/><path d="M9.5 30 L9.5 21.5 L21.8 9.2 L30 17.4 L30 30 Z" fill="#f4f4f4"/><path d="M12.5 27 L12.5 23 L22 13.5 L26.9 18.3 L17.8 27 Z" fill="#1f1f1f" stroke="#1f1f1f" stroke-width="1" stroke-linejoin="round"/></svg>
<div style="position:absolute;top:119.6px;font-size:28.8px;line-height:28.8px;color:#1f1f1f;font-weight:400;font-family:'Liberation Sans', sans-serif;white-space:nowrap;left:2477px;-webkit-text-stroke:0.6px #1f1f1f;">Properties</div>
<div style="position:absolute;left:2434px;top:170px;width:175px;height:4px;background:#1f1f1f;"></div>
<svg style="position:absolute;left:2644px;top:119px;" width="31" height="30" viewBox="0 0 31 30"><rect x="1" y="8.5" width="18.5" height="20" rx="4.5" fill="#8a8fa5"/><rect x="8" y="-1" width="24" height="23" rx="5" fill="#f4f4f4"/><rect x="11" y="1" width="19" height="20" rx="4" fill="#8a8fa5"/><path d="M20.5 7.5 V14.5 M17 11 H24" stroke="#fff" stroke-width="3" stroke-linecap="round"/></svg>
<div style="position:absolute;top:120.3px;font-size:28px;line-height:28px;color:#8a8fa5;font-weight:400;font-family:'Liberation Sans', sans-serif;white-space:nowrap;left:2686px;">Insert</div>
<div style="position:absolute;top:203.5px;font-size:32.5px;line-height:32.5px;color:#1f1f1f;font-weight:400;font-family:'Liberation Sans', sans-serif;white-space:nowrap;left:2425px;-webkit-text-stroke:0.4px #1f1f1f;">button1</div>
<svg style="position:absolute;left:2884px;top:203px;" width="32" height="32" viewBox="0 0 32 32"><circle cx="13" cy="13" r="10.5" stroke="#8a8fa5" stroke-width="2.8" fill="none"/><path d="M21 21 L28 28" stroke="#8a8fa5" stroke-width="2.8" stroke-linecap="round"/></svg>
<svg style="position:absolute;left:2956px;top:215px;" width="32" height="8" viewBox="0 0 32 8"><circle cx="4" cy="4" r="3" fill="#8a8fa5"/><circle cx="15" cy="4" r="3" fill="#8a8fa5"/><circle cx="26" cy="4" r="3" fill="#8a8fa5"/></svg>
<div style="position:absolute;left:2400px;top:263px;width:624px;height:2px;background:#dfe3ea;"></div>
<div style="position:absolute;top:298.3px;font-size:28px;line-height:28px;color:#8a8fa5;font-weight:700;font-family:'Liberation Sans', sans-serif;white-space:nowrap;left:2433px;">Basic</div>
<svg style="position:absolute;left:2960px;top:305px;" width="24" height="14" viewBox="0 0 24 14"><path d="M2 12 L12 3 L22 12" stroke="#8a8fa5" stroke-width="2.6" fill="none" stroke-linecap="round" stroke-linejoin="round"/></svg>
<div style="position:absolute;top:377.0px;font-size:26px;line-height:26px;color:#1f1f1f;font-weight:400;font-family:'Liberation Sans', sans-serif;white-space:nowrap;left:2432px;">Text</div>
<div style="position:absolute;left:2624px;top:359px;width:367px;height:63px;background:#fff;border:2px solid #d3d5dc;border-radius:8px;box-sizing:border-box;"></div>
<div style="position:absolute;top:379.1px;font-size:26px;line-height:26px;color:#1f1f1f;font-weight:400;font-family:'Liberation Mono', monospace;white-space:nowrap;left:2643px;">Refresh items</div>
<div style="position:absolute;left:2400px;top:453px;width:624px;height:2px;background:#dfe3ea;"></div>
<div style="position:absolute;top:487.3px;font-size:28px;line-height:28px;color:#8a8fa5;font-weight:700;font-family:'Liberation Sans', sans-serif;white-space:nowrap;left:2433px;">Interaction</div>
<svg style="position:absolute;left:2960px;top:494px;" width="24" height="14" viewBox="0 0 24 14"><path d="M2 12 L12 3 L22 12" stroke="#8a8fa5" stroke-width="2.6" fill="none" stroke-linecap="round" stroke-linejoin="round"/></svg>
<div style="position:absolute;top:562.0px;font-size:26px;line-height:26px;color:#1f1f1f;font-weight:400;font-family:'Liberation Sans', sans-serif;white-space:nowrap;left:2433px;">Type</div>
<div style="position:absolute;left:2624px;top:548px;width:367px;height:56px;background:#eeeff2;border-radius:10px;"></div>
<div style="position:absolute;left:2627px;top:551px;width:181px;height:48px;background:#fff;border-radius:8px;box-shadow:0 1px 3px rgba(0,0,0,0.12);"></div>
<div style="position:absolute;top:562.0px;font-size:26px;line-height:26px;color:#1f1f1f;font-weight:400;font-family:'Liberation Sans', sans-serif;white-space:nowrap;left:1718px;width:2000px;text-align:center;-webkit-text-stroke:0.5px #1f1f1f;">Default</div>
<div style="position:absolute;top:562.0px;font-size:26px;line-height:26px;color:#8d92a6;font-weight:400;font-family:'Liberation Sans', sans-serif;white-space:nowrap;left:1898px;width:2000px;text-align:center;">Submit</div>
<div style="position:absolute;top:635.0px;font-size:26px;line-height:26px;color:#1f1f1f;font-weight:400;font-family:'Liberation Sans', sans-serif;white-space:nowrap;left:2433px;">Event handlers</div>
<div style="position:absolute;top:634.1px;font-size:27px;line-height:27px;color:#4a62e8;font-weight:400;font-family:'Liberation Sans', sans-serif;white-space:nowrap;right:39px;text-align:right;">+ Add</div>
<div style="position:absolute;left:2433px;top:685px;width:558px;height:63px;background:#fff;border:2px solid #d3d5dc;border-radius:8px;box-sizing:border-box;"></div>
<div style="position:absolute;top:703.0px;font-size:26px;line-height:26px;color:#1f1f1f;font-weight:400;font-family:'Liberation Sans', sans-serif;white-space:nowrap;left:2458px;">Click</div>
<div style="position:absolute;top:703.0px;font-size:26px;line-height:26px;color:#8a8fa5;font-weight:400;font-family:'Liberation Sans', sans-serif;white-space:nowrap;left:2617px;">products.run()</div>
<svg style="position:absolute;left:2938px;top:713px;" width="32" height="8" viewBox="0 0 32 8"><circle cx="4" cy="4" r="3" fill="#8a8fa5"/><circle cx="15" cy="4" r="3" fill="#8a8fa5"/><circle cx="26" cy="4" r="3" fill="#8a8fa5"/></svg>
<div style="position:absolute;left:2433px;top:765px;width:558px;height:63px;background:#fff;border:2px solid #d3d5dc;border-radius:8px;box-sizing:border-box;"></div>
<div style="position:absolute;top:783.0px;font-size:26px;line-height:26px;color:#1f1f1f;font-weight:400;font-family:'Liberation Sans', sans-serif;white-space:nowrap;left:2458px;">Click</div>
<div style="position:absolute;top:783.0px;font-size:26px;line-height:26px;color:#8a8fa5;font-weight:400;font-family:'Liberation Sans', sans-serif;white-space:nowrap;left:2617px;">module1.refresh_display()</div>
<svg style="position:absolute;left:2938px;top:793px;" width="32" height="8" viewBox="0 0 32 8"><circle cx="4" cy="4" r="3" fill="#8a8fa5"/><circle cx="15" cy="4" r="3" fill="#8a8fa5"/><circle cx="26" cy="4" r="3" fill="#8a8fa5"/></svg>
<div style="position:absolute;top:863.0px;font-size:26px;line-height:26px;color:#1f1f1f;font-weight:400;font-family:'Liberation Sans', sans-serif;white-space:nowrap;left:2433px;">Disabled</div>
<div style="position:absolute;left:2624px;top:846px;width:367px;height:63px;background:#fff;border:2px solid #d3d5dc;border-radius:8px;box-sizing:border-box;"></div>
<div style="position:absolute;top:943.0px;font-size:26px;line-height:26px;color:#1f1f1f;font-weight:400;font-family:'Liberation Sans', sans-serif;white-space:nowrap;left:2433px;">Loading</div>
<div style="position:absolute;left:2624px;top:926px;width:367px;height:63px;background:#fff;border:2px solid #d3d5dc;border-radius:8px;box-sizing:border-box;"></div>
<div style="position:absolute;left:2400px;top:1021px;width:624px;height:2px;background:#dfe3ea;"></div>
<div style="position:absolute;top:1054.3px;font-size:28px;line-height:28px;color:#8a8fa5;font-weight:700;font-family:'Liberation Sans', sans-serif;white-space:nowrap;left:2433px;">Layout</div>
<svg style="position:absolute;left:2960px;top:1061px;" width="24" height="14" viewBox="0 0 24 14"><path d="M2 12 L12 3 L22 12" stroke="#8a8fa5" stroke-width="2.6" fill="none" stroke-linecap="round" stroke-linejoin="round"/></svg>
<div style="position:absolute;top:1135.0px;font-size:26px;line-height:26px;color:#1f1f1f;font-weight:400;font-family:'Liberation Sans', sans-serif;white-space:nowrap;left:2433px;">Prefix icon</div>
<div style="position:absolute;left:2624px;top:1116px;width:311px;height:63px;background:#fff;border:2px solid #d3d5dc;border-radius:8px;box-sizing:border-box;"></div>
<div style="position:absolute;top:1135.0px;font-size:26px;line-height:26px;color:#8a8fa5;font-weight:400;font-family:'Liberation Sans', sans-serif;white-space:nowrap;left:1780px;width:2000px;text-align:center;">Select an icon</div>
<div style="position:absolute;top:1135.1px;font-size:27.04px;line-height:27.04px;color:#8a8fa5;font-weight:700;font-family:'Liberation Sans', sans-serif;white-space:nowrap;left:2957px;font-style:italic;">J</div>
<div style="position:absolute;top:1138.7px;font-size:23.400000000000002px;line-height:23.400000000000002px;color:#8a8fa5;font-weight:700;font-family:'Liberation Sans', sans-serif;white-space:nowrap;left:2969.5px;font-style:italic;">s</div>
<div style="position:absolute;top:1214.0px;font-size:26px;line-height:26px;color:#1f1f1f;font-weight:400;font-family:'Liberation Sans', sans-serif;white-space:nowrap;left:2433px;">Suffix icon</div>
<div style="position:absolute;left:2624px;top:1196px;width:311px;height:63px;background:#fff;border:2px solid #d3d5dc;border-radius:8px;box-sizing:border-box;"></div>
<div style="position:absolute;top:1215.0px;font-size:26px;line-height:26px;color:#8a8fa5;font-weight:400;font-family:'Liberation Sans', sans-serif;white-space:nowrap;left:1780px;width:2000px;text-align:center;">Select an icon</div>
<div style="position:absolute;top:1215.1px;font-size:27.04px;line-height:27.04px;color:#8a8fa5;font-weight:700;font-family:'Liberation Sans', sans-serif;white-space:nowrap;left:2957px;font-style:italic;">J</div>
<div style="position:absolute;top:1218.7px;font-size:23.400000000000002px;line-height:23.400000000000002px;color:#8a8fa5;font-weight:700;font-family:'Liberation Sans', sans-serif;white-space:nowrap;left:2969.5px;font-style:italic;">s</div>
<div style="position:absolute;top:1294.0px;font-size:26px;line-height:26px;color:#1f1f1f;font-weight:400;font-family:'Liberation Sans', sans-serif;white-space:nowrap;left:2433px;">Hidden</div>
<div style="position:absolute;left:2624px;top:1276px;width:367px;height:63px;background:#fff;border:2px solid #d3d5dc;border-radius:8px;box-sizing:border-box;"></div>
<div style="position:absolute;left:2400px;top:1371px;width:624px;height:2px;background:#dfe3ea;"></div>
<div style="position:absolute;top:1405.3px;font-size:28px;line-height:28px;color:#8a8fa5;font-weight:700;font-family:'Liberation Sans', sans-serif;white-space:nowrap;left:2433px;">Style</div>
<svg style="position:absolute;left:2960px;top:1412px;" width="24" height="14" viewBox="0 0 24 14"><path d="M2 12 L12 3 L22 12" stroke="#8a8fa5" stroke-width="2.6" fill="none" stroke-linecap="round" stroke-linejoin="round"/></svg>
<div style="position:absolute;top:1465.0px;font-size:26px;line-height:26px;color:#1f1f1f;font-weight:400;font-family:'Liberation Sans', sans-serif;white-space:nowrap;left:2433px;">Style</div>
<svg style="position:absolute;left:2962px;top:1468px;" width="28" height="28" viewBox="0 0 28 28"><path d="M9 3 L3 9 L9 15" stroke="#8a8fa5" stroke-width="2.6" fill="none" stroke-linecap="round" stroke-linejoin="round"/><path d="M3 9 H15 Q23 9 23 16.5 Q23 24 15 24 H11" stroke="#8a8fa5" stroke-width="2.6" fill="none" stroke-linecap="round"/></svg>
<div style="position:absolute;left:2433px;top:1513px;width:559px;height:260px;border:2px solid #d3d5dc;border-radius:12px;box-sizing:border-box;"></div>
<div style="position:absolute;left:2435px;top:1579px;width:555px;height:2px;background:#d3d5dc;"></div>
<div style="position:absolute;left:2435px;top:1645px;width:555px;height:2px;background:#d3d5dc;"></div>
<div style="position:absolute;left:2435px;top:1711px;width:555px;height:2px;background:#d3d5dc;"></div>
<div style="position:absolute;top:1533.0px;font-size:26px;line-height:26px;color:#1f1f1f;font-weight:400;font-family:'Liberation Sans', sans-serif;white-space:nowrap;left:2459px;">Background</div>
<div style="position:absolute;left:2651px;top:1524px;width:46px;height:46px;background:#d98f5b;border-radius:8px;box-shadow:0 0 0 2px #ececec;"></div>
<div style="position:absolute;top:1536.1px;font-size:26px;line-height:26px;color:#1f1f1f;font-weight:400;font-family:'Liberation Mono', monospace;white-space:nowrap;left:2727px;">#E68E50</div>
<div style="position:absolute;top:1599.0px;font-size:26px;line-height:26px;color:#1f1f1f;font-weight:400;font-family:'Liberation Sans', sans-serif;white-space:nowrap;left:2459px;">Border</div>
<div style="position:absolute;left:2651px;top:1590px;width:46px;height:46px;background:#d78a54;border-radius:8px;box-shadow:0 0 0 2px #ececec;"></div>
<div style="position:absolute;top:1599.0px;font-size:26px;line-height:26px;color:#8a8fa5;font-weight:400;font-family:'Liberation Sans', sans-serif;white-space:nowrap;left:2727px;">Generated</div>
<div style="position:absolute;top:1665.0px;font-size:26px;line-height:26px;color:#1f1f1f;font-weight:400;font-family:'Liberation Sans', sans-serif;white-space:nowrap;left:2459px;">Border Width</div>
<svg style="position:absolute;left:2655px;top:1664px;" width="34" height="34" viewBox="0 0 34 34"><path d="M4 31 V14 Q4 4 14 4 H30" stroke="#8a8fa5" stroke-width="5" fill="none" stroke-linecap="round"/></svg>
<div style="position:absolute;top:1668.1px;font-size:26px;line-height:26px;color:#8a8fa5;font-weight:400;font-family:'Liberation Mono', monospace;white-space:nowrap;left:2727px;">1px</div>
<div style="position:absolute;top:1732.0px;font-size:26px;line-height:26px;color:#1f1f1f;font-weight:400;font-family:'Liberation Sans', sans-serif;white-space:nowrap;left:2459px;">Border radius</div>
<svg style="position:absolute;left:2655px;top:1730px;" width="34" height="10" viewBox="0 0 34 10"><path d="M4 31 V14 Q4 4 14 4 H30" stroke="#8a8fa5" stroke-width="5" fill="none" stroke-linecap="round"/></svg>
<div style="position:absolute;left:1790px;top:452px;width:624px;height:690px;background:#fff;border-radius:20px;box-shadow:0 0 34px rgba(0,0,0,0.17),0 24px 90px rgba(0,0,0,0.07);"></div>
<div style="position:absolute;top:485.8px;font-size:31px;line-height:31px;color:#1f1f1f;font-weight:700;font-family:'Liberation Sans', sans-serif;white-space:nowrap;left:1823px;">Edit</div>
<svg style="position:absolute;left:2350px;top:485px;" width="32" height="32" viewBox="0 0 32 32"><path d="M4 4 L28 28 M28 4 L4 28" stroke="#8a8fa5" stroke-width="2.6" stroke-linecap="round"/></svg>
<div style="position:absolute;top:567.0px;font-size:26px;line-height:26px;color:#1f1f1f;font-weight:400;font-family:'Liberation Sans', sans-serif;white-space:nowrap;left:1823px;">Action</div>
<div style="position:absolute;left:2014px;top:548px;width:368px;height:64px;background:#fff;border:2px solid #d3d5dc;border-radius:8px;box-sizing:border-box;"></div>
<div style="position:absolute;top:567.0px;font-size:26px;line-height:26px;color:#1f1f1f;font-weight:400;font-family:'Liberation Sans', sans-serif;white-space:nowrap;left:2041px;">Control component</div>
<svg style="position:absolute;left:2335px;top:573px;" width="22" height="13" viewBox="0 0 22 13"><path d="M2.6 2.6 L11.0 10.4 L19.4 2.6" stroke="#8a8fa5" stroke-width="2.6" fill="none" stroke-linecap="round" stroke-linejoin="round"/></svg>
<div style="position:absolute;left:1838.5px;top:628px;width:2.5px;height:248px;background:#d5d7de;"></div>
<div style="position:absolute;left:1840px;top:652.8px;width:14px;height:2.5px;background:#d5d7de;"></div>
<svg style="position:absolute;left:1851px;top:649.5px;" width="9" height="9" viewBox="0 0 9 9"><circle cx="4.5" cy="4.5" r="3.5" fill="#d5d7de"/></svg>
<div style="position:absolute;left:1840px;top:732.8px;width:14px;height:2.5px;background:#d5d7de;"></div>
<svg style="position:absolute;left:1851px;top:729.5px;" width="9" height="9" viewBox="0 0 9 9"><circle cx="4.5" cy="4.5" r="3.5" fill="#d5d7de"/></svg>
<div style="position:absolute;left:1840px;top:874.8px;width:14px;height:2.5px;background:#d5d7de;"></div>
<svg style="position:absolute;left:1851px;top:871.5px;" width="9" height="9" viewBox="0 0 9 9"><circle cx="4.5" cy="4.5" r="3.5" fill="#d5d7de"/></svg>
<div style="position:absolute;top:646.0px;font-size:26px;line-height:26px;color:#1f1f1f;font-weight:400;font-family:'Liberation Sans', sans-serif;white-space:nowrap;left:1870px;">Component</div>
<div style="position:absolute;left:2062px;top:628px;width:320px;height:63px;background:#fff;border:2px solid #d3d5dc;border-radius:8px;box-sizing:border-box;"></div>
<div style="position:absolute;top:646.0px;font-size:26px;line-height:26px;color:#1f1f1f;font-weight:400;font-family:'Liberation Sans', sans-serif;white-space:nowrap;left:2089px;">module1</div>
<svg style="position:absolute;left:2335px;top:654px;" width="22" height="13" viewBox="0 0 22 13"><path d="M2.6 2.6 L11.0 10.4 L19.4 2.6" stroke="#8a8fa5" stroke-width="2.6" fill="none" stroke-linecap="round" stroke-linejoin="round"/></svg>
<div style="position:absolute;top:726.0px;font-size:26px;line-height:26px;color:#1f1f1f;font-weight:400;font-family:'Liberation Sans', sans-serif;white-space:nowrap;left:1870px;">Method</div>
<div style="position:absolute;left:2062px;top:708px;width:320px;height:63px;background:#fff;border:2px solid #d3d5dc;border-radius:8px;box-sizing:border-box;"></div>
<div style="position:absolute;top:726.0px;font-size:26px;line-height:26px;color:#1f1f1f;font-weight:400;font-family:'Liberation Sans', sans-serif;white-space:nowrap;left:2089px;">refresh_display</div>
<svg style="position:absolute;left:2335px;top:734px;" width="22" height="13" viewBox="0 0 22 13"><path d="M2.6 2.6 L11.0 10.4 L19.4 2.6" stroke="#8a8fa5" stroke-width="2.6" fill="none" stroke-linecap="round" stroke-linejoin="round"/></svg>
<div style="position:absolute;top:786.0px;font-size:26px;line-height:26px;color:#1f1f1f;font-weight:400;font-family:'Liberation Sans', sans-serif;white-space:nowrap;left:1870px;">method_data</div>
<div style="position:absolute;left:1871px;top:831px;width:511px;height:62px;background:#fff;border:2px solid #d3d5dc;border-radius:8px;box-sizing:border-box;"></div>
<div style="position:absolute;left:1888px;top:845px;width:31px;height:34px;background:#e6f2e4;"></div>
<div style="position:absolute;top:853.1px;font-size:26px;line-height:26px;color:#3f9b5b;font-weight:400;font-family:'Liberation Mono', monospace;white-space:nowrap;left:1889px;">{}</div>
<div style="position:absolute;top:916.0px;font-size:26px;line-height:26px;color:#8a8fa5;font-weight:400;font-family:'Liberation Sans', sans-serif;white-space:nowrap;left:1822px;">Advanced</div>
<div style="position:absolute;top:985.0px;font-size:26px;line-height:26px;color:#1f1f1f;font-weight:400;font-family:'Liberation Sans', sans-serif;white-space:nowrap;left:1822px;">Only run when</div>
<svg style="position:absolute;left:1822px;top:1016px;" width="168" height="3" viewBox="0 0 168 3"><line x1="0" y1="1.5" x2="168" y2="1.5" stroke="#8a8fa5" stroke-width="2" stroke-dasharray="5 4"/></svg>
<div style="position:absolute;left:2014px;top:968px;width:368px;height:63px;background:#fff;border:2px solid #d3d5dc;border-radius:8px;box-sizing:border-box;"></div>
<div style="position:absolute;top:989.5px;font-size:25.5px;line-height:25.5px;color:#8d8d8d;font-weight:400;font-family:'Liberation Mono', monospace;white-space:nowrap;left:2035px;">{{ !!example.value }}</div>
<div style="position:absolute;top:1064.0px;font-size:26px;line-height:26px;color:#1f1f1f;font-weight:400;font-family:'Liberation Sans', sans-serif;white-space:nowrap;left:1825px;">Debounce</div>
<svg style="position:absolute;left:1951px;top:1073px;" width="22" height="13" viewBox="0 0 22 13"><path d="M2.6 2.6 L11.0 10.4 L19.4 2.6" stroke="#8a8fa5" stroke-width="2.6" fill="none" stroke-linecap="round" stroke-linejoin="round"/></svg>
<div style="position:absolute;left:2014px;top:1048px;width:368px;height:63px;background:#fff;border:2px solid #d3d5dc;border-radius:8px;box-sizing:border-box;"></div>
<div style="position:absolute;top:1068.1px;font-size:26px;line-height:26px;color:#8d8d8d;font-weight:400;font-family:'Liberation Mono', monospace;white-space:nowrap;left:2034px;">1s</div>
<div style="position:absolute;left:0px;top:0px;width:1px;height:1736px;background:rgba(255,255,255,0.12);"></div>
<div style="position:absolute;left:3023px;top:0px;width:1px;height:94px;background:rgba(255,255,255,0.12);"></div>
</div></body></html>
